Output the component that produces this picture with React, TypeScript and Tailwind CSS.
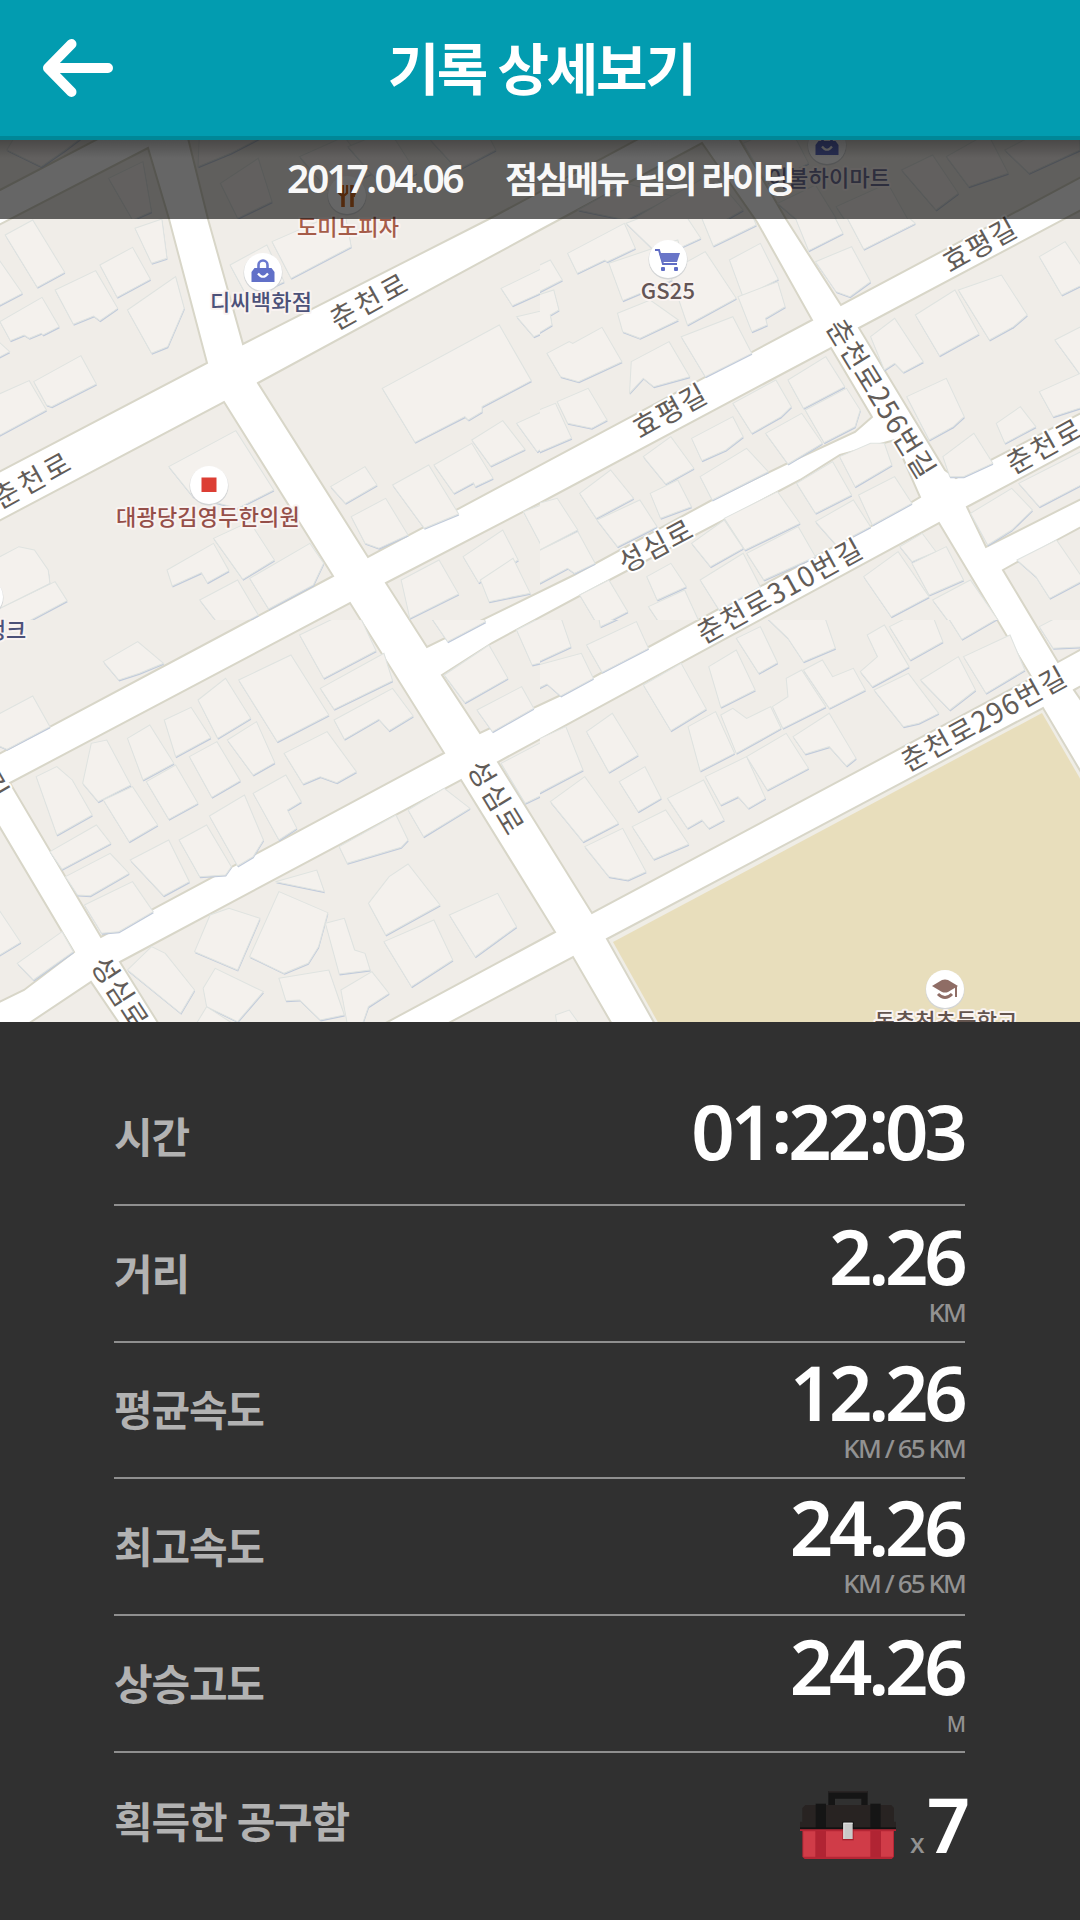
import React from "react";

const KR = "font-['Noto_Sans_CJK_KR',sans-serif]";
const NUM = "font-['Noto_Sans','Noto_Sans_CJK_KR',sans-serif]";

const blocks = [
  "-5,130 115,130 0,190 -5,192",
  "-5,227 148,148 169,219 207,363 -5,474",
  "186,130 208,219 243,344 489,219 655,130",
  "258,383 540,230 702,143 757,222 812,320 368,557",
  "734,130 786,219 841,305 1085,175 1085,130",
  "859,328 1085,208 1085,411 956,478 945,470",
  "831,348 872,417 855,432 788,463 712,500 574,575 427,647 386,583 540,503",
  "895,440 920,497 870,527 643,650 561,695 480,733 442,675 492,643 600,585 781,490 800,480 840,455",
  "939,523 1032,678 592,913 498,762",
  "967,507 1085,444 1085,497 986,547",
  "1003,570 1057,540 1085,525 1085,647 1058,662",
  "1074,690 1085,684 1085,706",
  "461,780 555,932 380,1026 160,1026 120,962",
  "10,783 350,603 444,753 101,937",
  "224,402 333,576 -5,756 -5,523",
  "-5,819 74,952 24,990 -5,1004",
  "25,1026 91,982 121,1026",
  "443,1026 573,957 613,1026",
];

/* Building footprints, one list per map tile. */
const tiles = [
  {
    at: "translate(0 210) scale(.34435 .33333)",
    clip: "tile-nw",
    shapes: [
      "15,75 95,30 188,187 108,232",
      "-9,140 65,250 -9,290",
      "0,335 122,262 172,350 125,375 120,370 85,385 70,375 30,392",
      "160,240 278,182 342,295 290,332 272,318 213,343",
      "290,165 385,112 437,208 340,262",
      "392,55 470,27 485,145 440,160",
      "370,300 510,200 535,295 487,410 440,430",
      "98,515 235,437 280,522 150,590 135,585",
      "-9,555 85,512 135,600 -9,680",
      "-9,390 28,425 -9,445",
      "668,165 775,105 825,215 720,265",
      "790,95 1000,0 1020,110 845,205",
      "1110,535 1450,345 1543,512 1400,590 1400,605 1360,630 1350,620 1205,697",
      "490,770 685,662 795,840 690,895 560,860",
      "960,830 1060,770 1095,825 1003,880",
      "1020,920 1120,865 1185,975 1100,1015 1060,1000",
      "1140,825 1245,765 1332,912 1232,955",
      "1260,765 1370,700 1432,805 1380,830 1375,818 1318,850",
      "1370,690 1460,632 1525,718 1425,768",
      "1500,640 1585,600 1585,708 1560,725",
      "1455,235 1585,170 1585,242 1488,287",
      "1500,320 1585,300 1585,365 1550,380",
      "620,985 725,935 797,1050 705,1108",
      "485,1080 620,1000 665,1082 602,1118 585,1088 500,1128",
      "725,1105 900,1000 940,1060 910,1125 780,1197",
      "580,1170 690,1110 750,1215 690,1248 640,1250",
      "-9,1045 55,1010 100,1020 140,1080 145,1120 -9,1200",
      "-9,1200 160,1115 195,1172 90,1230 -9,1275",
      "1345,1040 1460,960 1505,1050 1390,1118",
      "1165,1110 1275,1050 1332,1152 1190,1225",
      "1395,1110 1490,1045 1540,1150 1420,1175",
      "1520,905 1585,880 1585,1032",
    ],
  },
  {
    at: "translate(540 210) scale(.34435 .33333)",
    clip: "tile-ne",
    shapes: [
      "80,130 245,40 277,115 195,155 188,150 108,190",
      "250,40 400,-20 467,85 350,140",
      "460,0 590,-50 628,45 503,108",
      "-15,172 30,150 65,210 -15,252",
      "-15,258 40,240 55,300 30,315 35,345 -15,376",
      "200,160 400,90 430,190 240,272",
      "550,150 640,100 692,208 590,262",
      "375,185 480,125 570,265 428,345",
      "575,260 690,215 712,290 655,325 660,345 615,365",
      "225,310 320,270 402,330 290,385 240,365",
      "410,380 560,320 615,430 480,500",
      "20,430 85,395 95,400 180,352 238,455 112,515 60,500",
      "265,455 375,395 435,500 330,530 300,505 260,550",
      "50,575 140,535 195,630 150,655 80,640",
      "-15,605 45,580 92,685 -15,732",
      "740,20 830,-30 880,70 780,122",
      "890,20 1000,-40 1090,40 940,118",
      "800,155 905,110 960,215 900,260 860,245",
      "1090,315 1205,240 1275,372 1160,437",
      "1215,240 1340,195 1415,315 1375,350 1305,390",
      "960,380 1030,325 1113,455 1055,487 1030,460 1000,480",
      "1065,560 1180,505 1232,620 1200,650 1130,690",
      "1450,140 1525,95 1580,180 1580,222 1515,255",
      "1495,390 1580,345 1580,510",
      "1450,545 1580,485 1580,590 1490,620",
      "1325,640 1395,590 1440,650 1350,700",
      "720,510 830,440 885,530 765,595",
      "560,580 685,510 730,590 700,620 615,670",
      "440,685 560,620 590,680 540,720 470,752",
      "770,600 890,535 930,600 915,650 825,698",
      "655,670 760,610 820,700 720,762",
      "300,740 380,680 447,775 365,822",
      "115,850 205,780 272,865 163,925",
      "465,800 600,715 663,785 500,870",
      "165,930 290,870 340,950 225,1010",
      "320,850 400,810 440,890 350,925",
      "-15,883 50,865 110,960 -15,1028",
      "-15,1028 110,965 160,1060 100,1090 80,1075 -15,1127",
      "870,740 960,700 1000,700 1022,765 915,830",
      "745,820 850,755 905,855 800,910",
      "925,855 1030,800 1080,880 965,945",
      "800,935 910,870 960,950 860,1005",
      "535,925 690,845 755,940 595,1020",
      "440,1000 535,930 590,1015 495,1070",
      "600,1030 750,950 800,1040 650,1110",
      "310,1100 380,1060 425,1130 340,1170",
      "465,1110 590,1030 640,1130 520,1200",
      "115,1155 200,1110 255,1205 170,1250",
      "315,1190 420,1140 460,1230 370,1275",
      "1170,740 1260,670 1315,760 1230,800 1190,800",
      "1250,910 1370,835 1430,900 1370,960 1300,1005",
      "1390,820 1580,720 1580,820 1450,890",
      "1385,1050 1500,990 1580,1110 1480,1165 1440,1100",
      "1045,1010 1110,970 1150,1025 1080,1055",
      "1080,1060 1180,1010 1230,1110 1130,1155",
      "940,1100 1040,1025 1130,1160 1020,1220",
      "1140,1170 1250,1110 1330,1230 1225,1288",
    ],
  },
  {
    at: "translate(0 610) scale(.34435 .33333)",
    clip: "tile-sw",
    shapes: [
      "300,155 400,95 475,160 405,190 345,210",
      "-9,315 95,258 145,350 20,418 -9,405",
      "870,75 990,15 1050,30 1092,122 940,205",
      "930,235 1115,130 1140,212 970,298",
      "970,330 1140,235 1200,318 1130,362 1100,328 1000,388",
      "693,210 845,135 955,315 805,395",
      "575,270 655,205 728,325 632,385",
      "477,330 555,292 612,383 510,440",
      "370,385 435,345 505,460 415,510",
      "550,440 630,395 698,512 615,562",
      "660,390 745,335 798,458 735,495",
      "240,520 265,400 310,390 380,525 285,575",
      "105,500 165,470 210,510 268,615 165,675",
      "300,570 385,530 458,645 375,695",
      "425,515 510,465 575,580 490,628",
      "825,430 950,365 1035,485 978,518 930,500 880,522",
      "735,550 830,495 875,575 835,600 862,655 810,690",
      "608,618 710,555 765,690 735,740 690,768",
      "520,690 600,645 672,770 655,795 580,800",
      "378,750 490,690 550,815 475,857",
      "145,725 280,645 322,700 180,778",
      "190,800 320,730 375,790 262,857 225,855",
      "245,885 385,815 445,905 345,965 295,970",
      "50,1060 180,965 213,1025 97,1110",
      "-9,890 60,997 -9,1040",
      "1185,600 1290,535 1365,595 1230,680",
      "985,710 1150,615 1185,690 1165,712 1008,760",
      "1070,880 1130,800 1185,762 1278,885 1120,975",
      "1115,995 1260,930 1315,1050 1195,1130",
      "1305,915 1445,850 1500,950 1440,995 1380,1040",
      "725,1040 810,845 952,908 925,1010 895,1060 825,1090",
      "565,1025 610,915 665,895 755,925 690,1080",
      "370,1080 440,1010 480,1030 565,1140 525,1210",
      "590,1135 625,1075 765,1145 690,1235 600,1190",
      "810,1105 955,1080 1000,1215 930,1230 870,1170 830,1172",
      "945,940 1000,925 1030,1020 1060,1030 1075,1080 985,1092",
      "990,1140 1080,1085 1130,1150 1070,1190 1050,1250 1010,1250",
      "800,815 920,780 942,845",
      "565,1250 600,1190 690,1250",
      "1290,195 1420,105 1475,205 1350,278",
      "1385,300 1515,230 1550,295 1430,365",
      "1250,20 1370,-30 1410,35 1300,95",
      "1500,60 1585,15 1585,155 1545,165",
      "1455,460 1585,390 1585,550 1525,580",
    ],
  },
  {
    at: "translate(540 610) scale(.34435 .33333)",
    clip: "tile-se",
    shapes: [
      "-30,400 75,350 125,480 0,548 -30,560",
      "30,575 130,500 228,640 125,695",
      "135,365 210,310 285,435 200,487",
      "230,515 305,470 352,565 285,605",
      "130,710 240,655 308,785 255,810 200,800",
      "268,650 365,600 432,703 330,748",
      "370,565 475,510 535,630 490,655 470,630 428,655",
      "480,500 600,440 655,565 605,595 575,560 525,585",
      "600,440 715,370 780,475 660,540",
      "300,225 410,160 483,297 380,362",
      "490,170 570,120 625,240 525,292",
      "430,350 510,305 565,430 465,483",
      "525,315 560,295 600,325 670,290 700,355 570,430",
      "675,290 720,260 715,205 760,180 830,290 705,355",
      "735,380 840,310 918,445 890,468 840,410 770,432",
      "765,180 820,150 850,200 910,175 945,240 840,295",
      "570,85 640,50 690,158 635,190",
      "655,20 800,-60 858,115 765,155 720,85",
      "930,185 980,140 950,75 1000,45 1072,170 965,230",
      "970,240 1070,190 1158,310 1100,340 1055,350",
      "1105,210 1215,140 1265,240 1190,300",
      "1015,50 1130,-10 1170,95 1075,150",
      "1165,-10 1290,-70 1330,25 1225,88",
      "1230,140 1365,75 1408,180 1295,250",
      "135,105 280,35 315,115 180,187",
      "-15,168 120,130 155,205 60,258 20,222 -15,240",
      "-15,-10 60,20 90,110 -15,160",
      "165,-10 230,-40 260,10 175,50",
      "1450,50 1580,-20 1580,110 1490,115",
      "45,1215 85,1200 120,1250 50,1250",
    ],
  },
  {
    at: "translate(0 130) scale(.34435 .33333)",
    clip: "tile-top",
    shapes: [
      "120,110 190,60 280,-10 60,-10 20,60",
      "315,145 415,95 440,245 385,270",
      "575,110 670,70 800,0 580,-10",
      "640,160 750,85 790,215 690,265",
      "870,80 1000,20 1080,130 960,190",
      "1010,50 1130,0 1210,130 1120,180",
      "1250,30 1400,-20 1440,60 1330,120",
    ],
  },
  {
    at: "translate(540 130) scale(.34435 .33333)",
    clip: "tile-top",
    shapes: [
      "110,240 250,160 390,200 250,270",
      "250,280 380,200 500,130 590,240 470,310",
      "590,40 720,-20 780,100 660,160",
      "690,220 800,165 860,265 780,300",
      "860,230 1010,160 1080,290 930,340",
      "1050,120 1140,75 1215,190 1150,240",
      "1180,80 1300,10 1360,130 1245,170",
      "1350,60 1480,-10 1568,20 1568,60 1420,130",
    ],
  },
];

const roads = [
  { t: "춘천로", x: 370, y: 301, r: -29, s: 3 },
  { t: "춘천로", x: 33, y: 480, r: -29, s: 3 },
  { t: "효평길", x: 670, y: 411, r: -29, s: 1 },
  { t: "효평길", x: 980, y: 245, r: -29, s: 1 },
  { t: "춘천로256번길", x: 881, y: 399, r: 58.5, s: 0.7 },
  { t: "춘천로", x: 1045, y: 446, r: -29, s: 2 },
  { t: "성심로", x: 656, y: 546, r: -28, s: 1 },
  { t: "춘천로310번길", x: 780, y: 591, r: -29, s: 1.2 },
  { t: "춘천로296번길", x: 984, y: 719, r: -29, s: 1.2 },
  { t: "성심로", x: 496, y: 798, r: 59, s: 1.5 },
  { t: "성심로", x: 120, y: 993, r: 57, s: 1 },
  { t: "길", x: -6, y: 786, r: 60, s: 0 },
];

const places = [
  { t: "도미노피자", x: 348, y: 227, c: "#a55c49" },
  { t: "디씨백화점", x: 261, y: 302, c: "#4c5179" },
  { t: "GS25", x: 668, y: 291, c: "#635555" },
  { t: "대광당김영두한의원", x: 208, y: 517, c: "#954f49" },
  { t: "이불하이마트", x: 829, y: 178, c: "#71749a" },
  { t: "뱅크", x: 6, y: 630, c: "#4c5179" },
  { t: "동춘천초등학교", x: 946, y: 1021, c: "#63544e" },
];

const pins = [
  [263, 272], [209, 485], [668, 259], [347, 195], [827, 145], [945, 989], [-16, 597],
];

function BagIcon({ x, y }: { x: number; y: number }) {
  return (
    <g transform={`translate(${x} ${y})`}>
      <path d="M-4.5 -2 V-6 A4.5 4.5 0 0 1 4.5 -6 V-2" fill="none" stroke="#6b79cf" strokeWidth="2.6" />
      <path d="M-11.5 1 L-8.5 -3 H8.5 L11.5 1 V11 H-11.5 Z" fill="#6170c8" />
      <path d="M-5 2.5 Q0 9 5 2.5" fill="none" stroke="#fff" strokeWidth="2.2" />
    </g>
  );
}

function StreetMap() {
  return (
    <svg className="block h-full w-full" viewBox="0 140 1080 882" preserveAspectRatio="none">
      <defs>
        <clipPath id="tile-nw"><rect x="0" y="219" width="540" height="401" /></clipPath>
        <clipPath id="tile-ne"><rect x="540" y="219" width="540" height="401" /></clipPath>
        <clipPath id="tile-sw"><rect x="0" y="620" width="540" height="402" /></clipPath>
        <clipPath id="tile-se"><rect x="540" y="620" width="540" height="402" /></clipPath>
        <clipPath id="tile-top"><rect x="0" y="140" width="1080" height="79" /></clipPath>
      </defs>
      <rect x="0" y="140" width="1080" height="882" fill="#fff" />
      {blocks.map((p) => (
        <polygon key={p} points={p} fill="#f0ede8" stroke="#d8d6c8" strokeWidth="2" />
      ))}
      <polygon points="607,939 1043,708 1085,779 1085,1026 656,1026" fill="#efede6" stroke="#d8d6c8" strokeWidth="2" />
      <polygon points="613,942 1042,713 1085,787 1085,1026 660,1026" fill="#e8debc" />
      {tiles.map((tile) => (
        <g key={tile.at} clipPath={`url(#${tile.clip})`}>
          <g transform={tile.at}>
            {tile.shapes.map((p) => (
              <g key={p}>
                <polygon points={p} transform="translate(1.5 4.5)" fill="#c0cadb" />
                <polygon points={p} fill="#f4f1ed" stroke="#dfe3e0" strokeWidth="3" />
              </g>
            ))}
          </g>
        </g>
      ))}
      {pins.map(([x, y]) => (
        <g key={`${x}-${y}`}>
          <circle cx={x} cy={y + 1} r="19.5" fill="#d3d5d6" />
          <circle cx={x} cy={y} r="19" fill="#fff" />
        </g>
      ))}
      <BagIcon x={263} y={271} />
      <BagIcon x={827} y={144} />
      <rect x="201.5" y="477.5" width="15" height="14.5" fill="#dc3e34" />
      <g transform="translate(668 259)">
        <path d="M-13 -9 H-9 L-5 5 H9" fill="none" stroke="#5f6cc4" strokeWidth="2" />
        <path d="M-9 -6 H12 L9 3 H-6 Z" fill="#6975c8" />
        <rect x="-7" y="8" width="4" height="4" rx="1" fill="#5f6cc4" />
        <rect x="6" y="8" width="4" height="4" rx="1" fill="#5f6cc4" />
      </g>
      <g transform="translate(347 195)" stroke="#d06a22" fill="none">
        <path d="M-4 1 V12 M5 -10 V12" strokeWidth="3.6" />
        <path d="M-8 -10 V-2 Q-4 3 0 -2 V-10 M-4 -10 V1" strokeWidth="2.2" />
        <path d="M5 -10 Q11 -5 7 2 Z" fill="#d06a22" strokeWidth="1" />
      </g>
      <g transform="translate(945 989)">
        <path d="M-13 -3 L-3 -9 Q0 -10 3 -9 L13 -3 L3 3 Q0 4 -3 3 Z" fill="#8f6d65" />
        <path d="M11 -3 V8" stroke="#8f6d65" strokeWidth="2" />
        <path d="M-7 5 Q0 12 7 5" fill="none" stroke="#8f6d65" strokeWidth="3" />
      </g>
      <g
        className={KR}
        textAnchor="middle"
        fontSize="28"
        fill="#625c58"
        stroke="#fff"
        strokeWidth="4"
        strokeLinejoin="round"
        paintOrder="stroke"
      >
        {roads.map((l) => (
          <text key={`${l.x}-${l.y}`} transform={`translate(${l.x} ${l.y}) rotate(${l.r})`} y="10" letterSpacing={l.s}>
            {l.t}
          </text>
        ))}
      </g>
      <g
        className={KR}
        textAnchor="middle"
        fontSize="22"
        fontWeight="500"
        stroke="#f9f3f1"
        strokeWidth="4"
        strokeLinejoin="round"
        paintOrder="stroke"
        letterSpacing=".2"
      >
        {places.map((l) => (
          <text key={l.t} x={l.x} y={l.y + 8} fill={l.c}>
            {l.t}
          </text>
        ))}
      </g>
    </svg>
  );
}

function Toolbox() {
  return (
    <svg className="h-[68px] w-[96px]" viewBox="60 63 288 204">
      <path d="M145 106 V63 H263 V106 H244 V86 H165 V106 Z" fill="#151515" />
      <rect x="145" y="63" width="118" height="5" fill="#292424" />
      <path d="M67 155 V114 L76 105 H334 L342 114 V155 H348 V178 H60 V155 Z" fill="#282322" />
      <rect x="107" y="101" width="31" height="77" fill="#151515" />
      <rect x="271" y="101" width="31" height="77" fill="#151515" />
      <rect x="60" y="172" width="288" height="6" fill="#121212" />
      <path d="M60 178 H348 V183 H342 V260 L335 267 H74 L67 260 V183 H60 Z" fill="#b52635" />
      <path d="M70 184 H339 V260 H70 Z" fill="#d03c48" />
      <rect x="106" y="183" width="32" height="79" fill="#b12433" />
      <rect x="271" y="183" width="32" height="79" fill="#b12433" />
      <path d="M187 155 H221 V178 H187 Z" fill="#0f0f0f" />
      <path d="M187 178 H221 V211 H187 Z" fill="#a81f2e" />
      <rect x="190" y="158" width="28" height="49" fill="#c9c9c9" />
      <path d="M190 158 H218 V161 H193 V207 H190 Z" fill="#e4e4e4" />
    </svg>
  );
}

function Row({ label, height, children }: { label: string; height: string; children: React.ReactNode }) {
  return (
    <div className={`flex justify-between border-b-2 border-[#8f8f8f] ${height} last:border-b-0`}>
      <div
        className={`${KR} flex items-center pb-[4px] text-[42px] leading-none font-bold tracking-[-1.2px] text-[#b2b2b2] [word-spacing:2px]`}
      >
        {label}
      </div>
      {children}
    </div>
  );
}

function Value({ value, unit, pad, unitClass }: { value: React.ReactNode; unit?: string; pad: string; unitClass?: string }) {
  return (
    <div className={`flex flex-col items-end ${NUM} ${pad}`}>
      <div className="mr-[1.5px] text-[76px] leading-[76px] font-semibold tracking-[-4.2px] text-white">{value}</div>
      {unit && (
        <div className={`mt-[3px] leading-[30px] font-medium text-[#929292] ${unitClass ?? "text-[26px] tracking-[-1.9px]"}`}>
          {unit}
        </div>
      )}
    </div>
  );
}

function Colon() {
  return <span className="relative top-[-7px] ml-[1.5px]">:</span>;
}

export default function App() {
  return (
    <div className="flex h-[1920px] w-[1080px] flex-col overflow-hidden bg-[#303030]">
      <header className="relative flex h-[140px] shrink-0 items-center justify-center border-b-4 border-[#008798] bg-[#029cb0]">
        <svg className="absolute top-[38px] left-[42px] h-[60px] w-[72px]" viewBox="42 38 72 60">
          <path
            d="M108 68 H48 M71.5 44 L48 68 L71.5 92"
            fill="none"
            stroke="#fff"
            strokeWidth="10"
            strokeLinecap="round"
            strokeLinejoin="round"
          />
        </svg>
        <h1
          className={`${KR} pb-[4px] pl-[2px] text-[56px] leading-none font-bold tracking-[-2.3px] text-white [word-spacing:1px]`}
        >
          기록 상세보기
        </h1>
      </header>

      <section className="relative h-[882px] shrink-0">
        <StreetMap />
        <div className="absolute inset-x-0 top-0 flex h-[79px] items-center justify-center bg-black/60 pb-[5px] text-[#f8f8f8]">
          <div className={`${NUM} text-[39px] leading-none font-semibold tracking-[-2.5px]`}>2017.04.06</div>
          <div className={`${KR} ml-[43px] text-[36px] leading-none font-bold tracking-[-2.6px] [word-spacing:1px]`}>
            점심메뉴 님의 라이딩
          </div>
        </div>
        <div className="absolute inset-x-0 top-0 h-[18px] bg-linear-to-b from-black/25 to-transparent" />
      </section>

      <main className="flex flex-col pt-[47px] pr-[115px] pl-[114px]">
        <Row label="시간" height="h-[137px]">
          <Value
            pad="pt-[24px]"
            value={
              <>
                01
                <Colon />
                22
                <Colon />
                03
              </>
            }
          />
        </Row>
        <Row label="거리" height="h-[137px]">
          <Value pad="pt-[12px]" value="2.26" unit="KM" />
        </Row>
        <Row label="평균속도" height="h-[136px]">
          <Value pad="pt-[11px]" value="12.26" unit="KM / 65 KM" />
        </Row>
        <Row label="최고속도" height="h-[137px]">
          <Value pad="pt-[10px]" value="24.26" unit="KM / 65 KM" />
        </Row>
        <Row label="상승고도" height="h-[137px]">
          <Value pad="pt-[12px]" value="24.26" unit="M" unitClass="pt-[2px] text-[21px] tracking-[-1px]" />
        </Row>
        <Row label="획득한 공구함" height="h-[137px]">
          <div className={`flex items-start ${NUM}`}>
            <div className="mr-[14px] pt-[38px]">
              <Toolbox />
            </div>
            <div className="flex items-baseline pt-[33px]">
              <span className="mr-[2px] text-[27px] font-medium text-[#929292]">x</span>
              <span className="mr-[-1px] text-[76px] leading-[76px] font-semibold tracking-[-4.2px] text-white">7</span>
            </div>
          </div>
        </Row>
      </main>
    </div>
  );
}
